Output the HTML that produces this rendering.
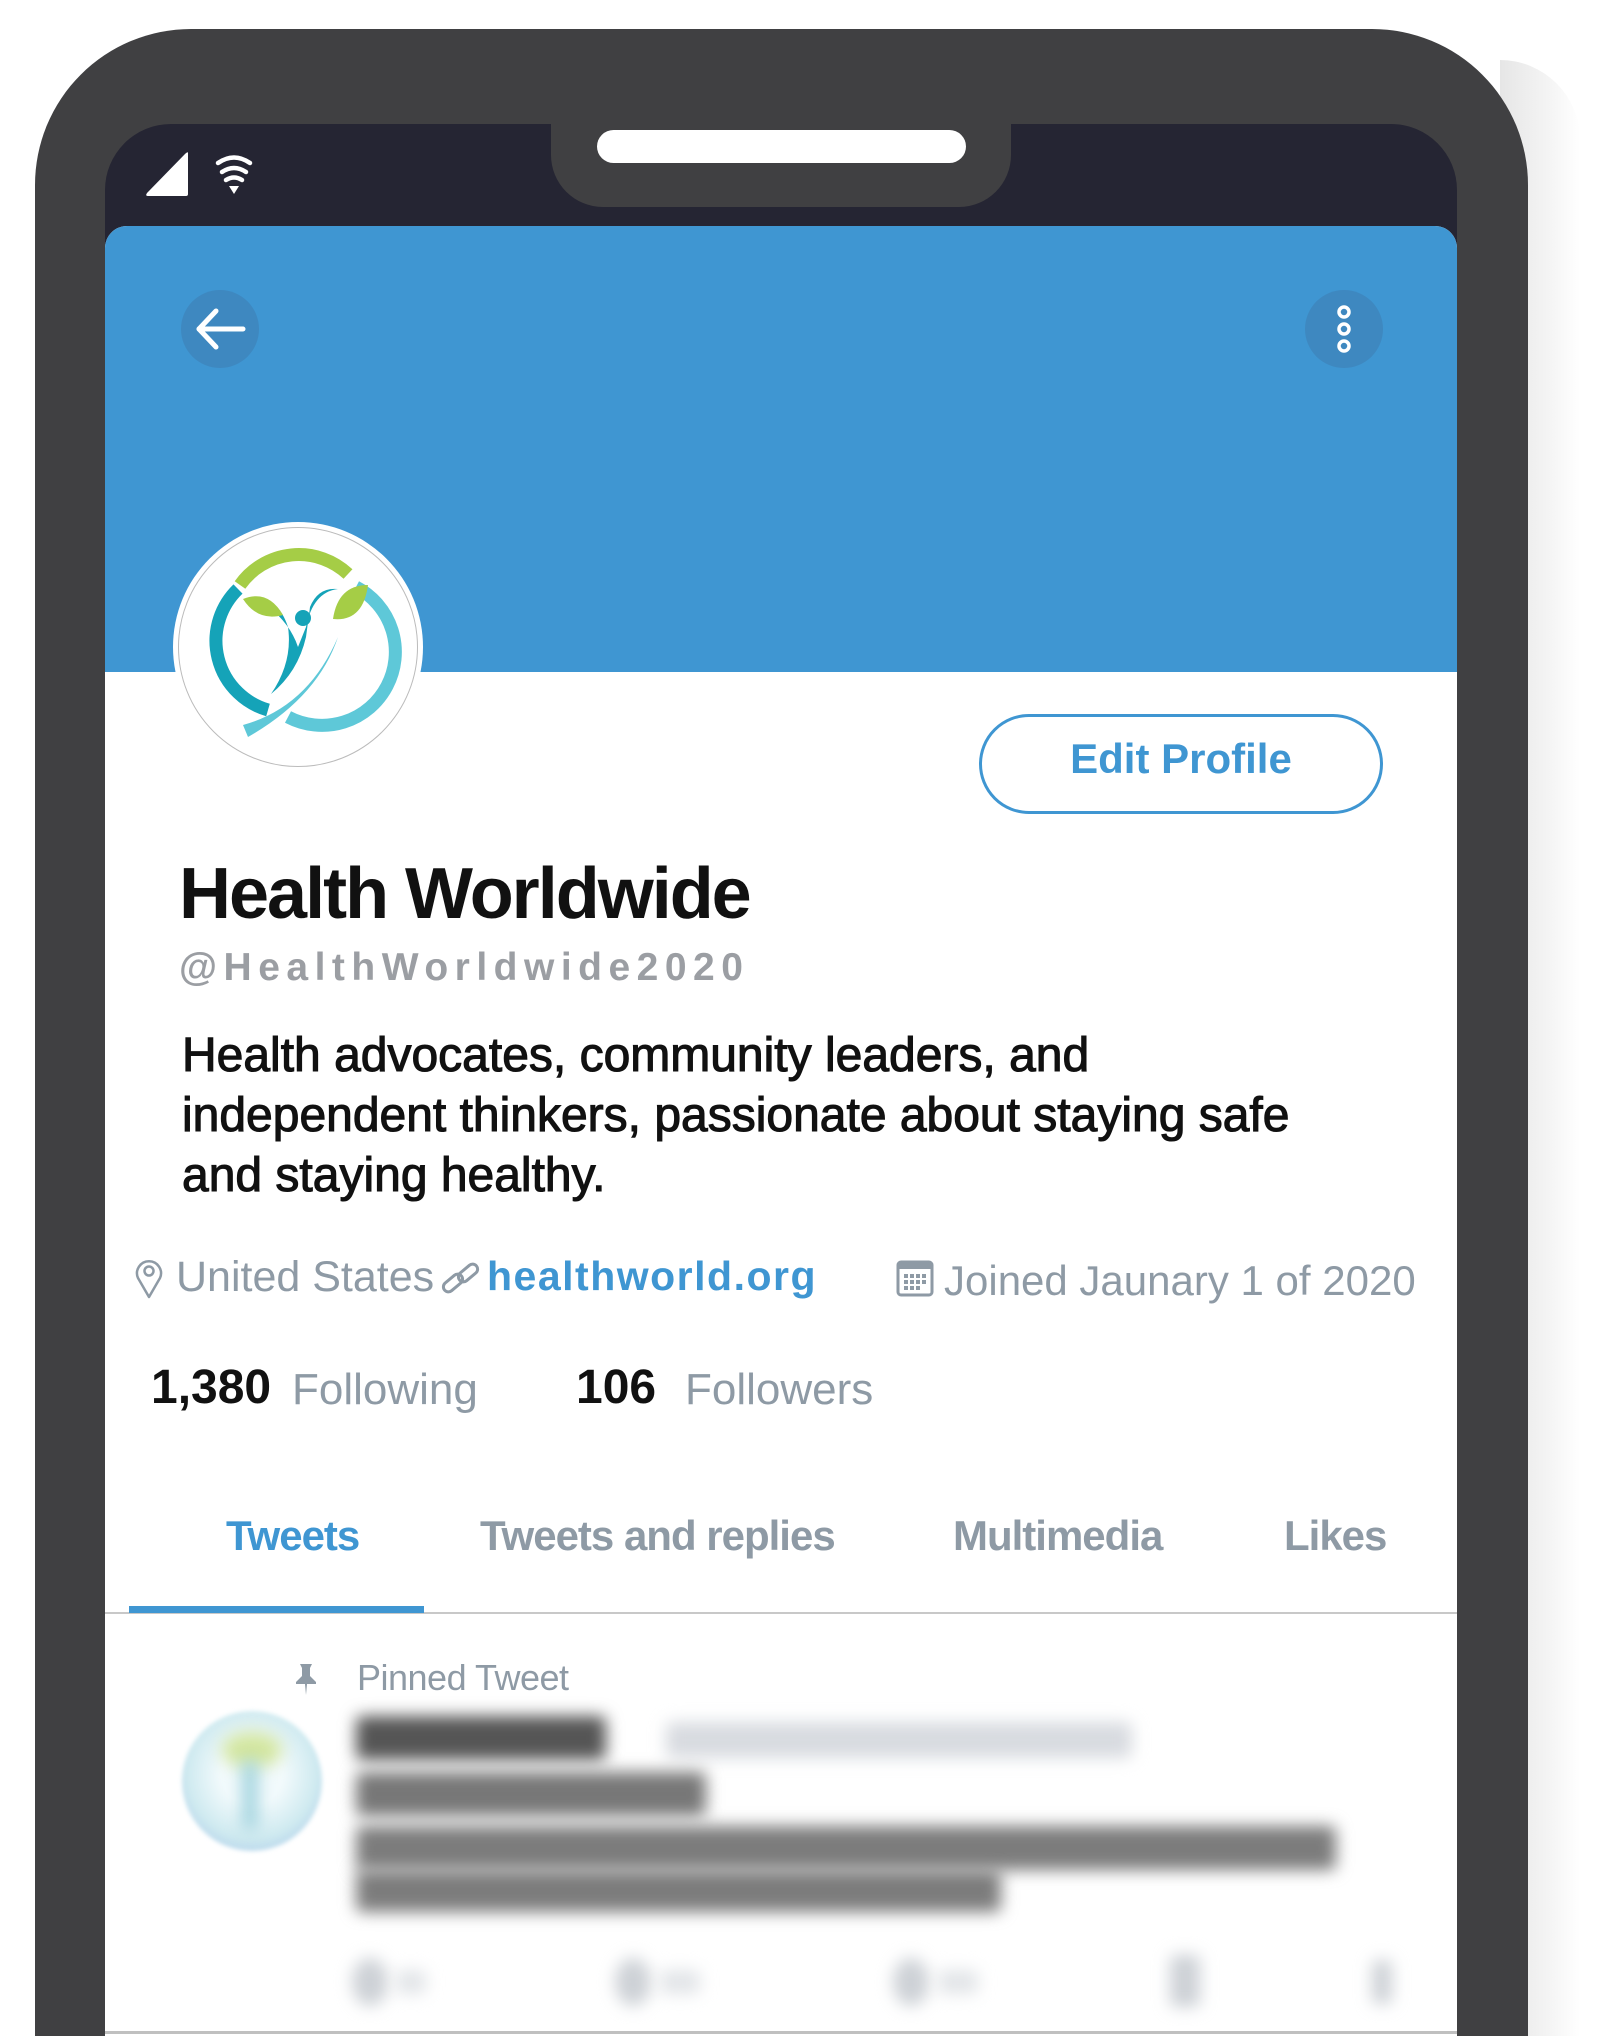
<!DOCTYPE html>
<html><head><meta charset="utf-8"><style>
*{margin:0;padding:0;box-sizing:border-box}
html,body{width:1619px;height:2036px;background:#fff;overflow:hidden;font-family:"Liberation Sans",sans-serif;position:relative}
.abs{position:absolute}
.t{position:absolute;white-space:nowrap;line-height:1}
.g{color:#8e9aa5}
.bl{filter:blur(8px);position:absolute;border-radius:6px}
</style></head><body>
<div class="abs" style="left:1500px;top:60px;width:80px;height:1976px;background:linear-gradient(90deg,#e6e6e6,#f4f4f4 60%,#fff);border-radius:0 160px 0 0"></div>
<div class="abs" style="left:35px;top:29px;width:1493px;height:2007px;background:#404042;border-radius:156px 156px 0 0"></div>
<div class="abs" style="left:105px;top:124px;width:1352px;height:1912px;background:#252533;border-radius:66px 66px 0 0"></div>
<div class="abs" style="left:551px;top:110px;width:460px;height:97px;background:#404042;border-radius:0 0 52px 52px"></div>
<div class="abs" style="left:597px;top:130px;width:369px;height:33px;background:#fff;border-radius:17px"></div>
<svg class="abs" style="left:140px;top:148px" width="120" height="54" viewBox="0 0 120 54">
<path d="M48 5 L48 46 Q48 48 46 48 L8 48 Q5 48 7 45 L45 6 Q48 3 48 5Z" fill="#fff"/>
<g fill="none" stroke="#fff" stroke-width="4.5" stroke-linecap="round">
<path d="M78 15 Q94 4 110 15"/><path d="M82 24 Q94 16 106 24"/><path d="M86 32 Q94 27 102 32"/>
</g>
<path d="M89 38 L99 38 L94 46Z" fill="#fff"/>
</svg>
<div class="abs" style="left:105px;top:226px;width:1352px;height:1810px;background:#fff;border-radius:22px 22px 0 0"></div>
<div class="abs" style="left:105px;top:226px;width:1352px;height:446px;background:#3f96d2;border-radius:22px 22px 0 0"></div>
<div class="abs" style="left:181px;top:290px;width:78px;height:78px;border-radius:50%;background:#3e88c0"></div>
<svg class="abs" style="left:181px;top:290px" width="78" height="78"><g fill="none" stroke="#fff" stroke-width="5" stroke-linecap="round" stroke-linejoin="round"><path d="M18 39 H62"/><path d="M35 21 L18 39 L35 57"/></g></svg>
<div class="abs" style="left:1305px;top:290px;width:78px;height:78px;border-radius:50%;background:#3e88c0"></div>
<svg class="abs" style="left:1305px;top:290px" width="78" height="78"><g fill="none" stroke="#fff" stroke-width="3.5"><circle cx="39" cy="22" r="5"/><circle cx="39" cy="39" r="5"/><circle cx="39" cy="56" r="5"/></g></svg>
<div class="abs" style="left:178px;top:527px;width:240px;height:240px;border-radius:50%;background:#fff;border:1px solid #bbb;box-shadow:0 0 0 5px #fff"></div>
<svg class="abs" style="left:178px;top:527px" width="240" height="240" viewBox="0 0 240 240">
<g fill="none" stroke-width="13">
<path d="M60 62 A72 72 0 0 0 90 183" stroke="#15a3b8"/>
<path d="M178 60 A72 72 0 0 1 110 190" stroke="#5ec8d8"/>
<path d="M62 58 A72 72 0 0 1 170 47" stroke="#a5cd46"/>
</g>
<path d="M65 198 Q130 180 160 110 Q140 170 70 210Z" fill="#5ec8d8"/>
<path d="M76 70 Q100 70 110 100 Q115 135 93 167 Q120 145 128 110 L132 80 Q140 60 160 62 Q135 65 128 100 L120 120 Q110 90 76 70Z" fill="#15a3b8"/>
<circle cx="125" cy="91" r="8" fill="#15a3b8"/>
<path d="M65 72 Q90 62 105 88 Q80 95 65 72Z" fill="#a5cd46"/>
<path d="M190 58 Q185 95 155 92 Q160 58 190 58Z" fill="#a5cd46"/>
</svg>
<div class="abs" style="left:979px;top:714px;width:404px;height:100px;border:3.5px solid #3f96d2;border-radius:50px"></div>
<div class="t" style="left:979px;top:738px;width:404px;text-align:center;font-size:42px;font-weight:bold;color:#3f96d2">Edit Profile</div>
<div class="t" style="left:179px;top:858px;font-size:72px;font-weight:bold;letter-spacing:-2px;color:#111">Health Worldwide</div>
<div class="t" style="left:179px;top:948px;font-size:39px;font-weight:bold;letter-spacing:6.5px;color:#9b9ea3">@HealthWorldwide2020</div>
<div class="abs" style="left:182px;top:1026px;font-size:48px;line-height:60px;color:#111;-webkit-text-stroke:1.1px #111;width:1260px;white-space:nowrap">Health advocates, community leaders, and<br>independent thinkers, passionate about staying safe<br>and staying healthy.</div>
<svg class="abs" style="left:133px;top:1256px" width="32" height="44" viewBox="0 0 32 44"><path d="M16 41 L5 22 A12 12 0 1 1 27 22Z" fill="none" stroke="#8e9aa5" stroke-width="2.5" stroke-linejoin="round"/><circle cx="16" cy="15" r="4.5" fill="none" stroke="#8e9aa5" stroke-width="2.5"/></svg>
<div class="t g" style="left:176px;top:1256px;font-size:43px">United States</div>
<svg class="abs" style="left:440px;top:1260px" width="42" height="38" viewBox="0 0 42 38"><g fill="none" stroke="#8e9aa5" stroke-width="3"><rect x="2" y="18" width="22" height="10" rx="5" transform="rotate(-40 13 23)"/><rect x="17" y="8" width="22" height="10" rx="5" transform="rotate(-40 28 13)"/></g></svg>
<div class="t" style="left:487px;top:1256px;font-size:41px;font-weight:bold;letter-spacing:1.5px;color:#3f96d2">healthworld.org</div>
<svg class="abs" style="left:896px;top:1260px" width="40" height="40" viewBox="0 0 40 40"><rect x="2" y="2" width="34" height="33" rx="3" fill="none" stroke="#8e9aa5" stroke-width="3"/><rect x="2" y="2" width="34" height="7" fill="#8e9aa5"/><g fill="#8e9aa5"><rect x="8" y="14" width="4" height="4"/><rect x="14" y="14" width="4" height="4"/><rect x="20" y="14" width="4" height="4"/><rect x="26" y="14" width="4" height="4"/><rect x="8" y="20" width="4" height="4"/><rect x="14" y="20" width="4" height="4"/><rect x="20" y="20" width="4" height="4"/><rect x="26" y="20" width="4" height="4"/><rect x="8" y="26" width="4" height="4"/><rect x="14" y="26" width="4" height="4"/><rect x="20" y="26" width="4" height="4"/></g></svg>
<div class="t g" style="left:944px;top:1260px;font-size:42px">Joined Jaunary 1 of 2020</div>
<div class="t" style="left:151px;top:1364px;font-size:48px;font-weight:bold;color:#111">1,380</div>
<div class="t g" style="left:292px;top:1368px;font-size:44px">Following</div>
<div class="t" style="left:576px;top:1364px;font-size:48px;font-weight:bold;color:#111">106</div>
<div class="t g" style="left:685px;top:1368px;font-size:44px">Followers</div>
<div class="t" style="left:226px;top:1515px;font-size:42px;font-weight:bold;letter-spacing:-1px;color:#3f96d2">Tweets</div>
<div class="t g" style="left:480px;top:1515px;font-size:42px;font-weight:bold;letter-spacing:-1px">Tweets and replies</div>
<div class="t g" style="left:953px;top:1515px;font-size:42px;font-weight:bold;letter-spacing:-1px">Multimedia</div>
<div class="t g" style="left:1284px;top:1515px;font-size:42px;font-weight:bold;letter-spacing:-1px">Likes</div>
<div class="abs" style="left:105px;top:1612px;width:1352px;height:2px;background:#c8c8c8"></div>
<div class="abs" style="left:129px;top:1606px;width:295px;height:7px;background:#3f96d2"></div>
<svg class="abs" style="left:292px;top:1662px" width="28" height="34" viewBox="0 0 28 34"><path d="M8 2 H20 L18 6 V14 L24 20 V22 H4 V20 L10 14 V6Z M13 22 H15 L14 33Z" fill="#8e9aa5"/></svg>
<div class="t g" style="left:357px;top:1660px;font-size:36px;letter-spacing:-0.5px">Pinned Tweet</div>
<div class="abs" style="left:182px;top:1711px;width:140px;height:140px;border-radius:50%;background:radial-gradient(circle at 50% 45%,#f2fafc 30%,#cfeaf0 62%,#98b9e6 100%);filter:blur(2px)"></div>
<div class="bl" style="left:222px;top:1732px;width:60px;height:36px;background:#d3e6a0;border-radius:50%"></div>
<div class="bl" style="left:242px;top:1760px;width:16px;height:70px;background:#a2d3de"></div>
<div class="bl" style="left:356px;top:1716px;width:250px;height:44px;background:#555"></div>
<div class="bl" style="left:666px;top:1722px;width:466px;height:36px;background:#d8dbe0"></div>
<div class="bl" style="left:356px;top:1772px;width:350px;height:44px;background:#777"></div>
<div class="bl" style="left:356px;top:1826px;width:980px;height:44px;background:#7c7c7c"></div>
<div class="bl" style="left:356px;top:1870px;width:645px;height:42px;background:#7c7c7c"></div>
<div class="bl" style="left:352px;top:1958px;width:36px;height:48px;background:#cdd1d6;border-radius:50%"></div>
<div class="bl" style="left:396px;top:1970px;width:30px;height:24px;background:#e2e5e8"></div>
<div class="bl" style="left:615px;top:1958px;width:36px;height:48px;background:#cdd1d6;border-radius:50%"></div>
<div class="bl" style="left:660px;top:1970px;width:40px;height:24px;background:#e2e5e8"></div>
<div class="bl" style="left:893px;top:1958px;width:36px;height:48px;background:#cdd1d6;border-radius:50%"></div>
<div class="bl" style="left:938px;top:1970px;width:40px;height:24px;background:#e2e5e8"></div>
<div class="bl" style="left:1170px;top:1955px;width:30px;height:52px;background:#cdd1d6"></div>
<div class="bl" style="left:1372px;top:1960px;width:20px;height:44px;background:#cdd1d6"></div>
<div class="abs" style="left:105px;top:2031px;width:1352px;height:3px;background:#c0c0c0"></div>
</body></html>
